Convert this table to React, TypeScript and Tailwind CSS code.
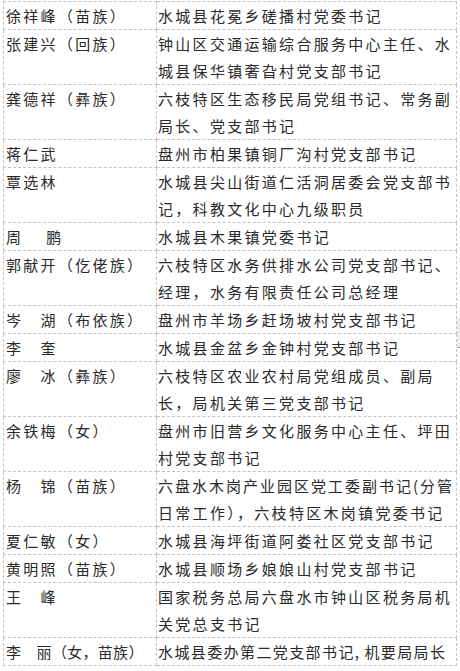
import React from "react";

type Line = { text: React.ReactNode; cls?: string };
type Row = { name: string; nameCls?: string; lines: Line[] };

const rows: Row[] = [
  { name: "徐祥峰（苗族）", lines: [{ text: "水城县花冕乡磋播村党委书记" }] },
  { name: "张建兴（回族）", lines: [{ text: "钟山区交通运输综合服务中心主任、水" }, { text: "城县保华镇奢旮村党支部书记" }] },
  { name: "龚德祥（彝族）", lines: [{ text: "六枝特区生态移民局党组书记、常务副" }, { text: "局长、党支部书记" }] },
  { name: "蒋仁武", lines: [{ text: "盘州市柏果镇铜厂沟村党支部书记" }] },
  { name: "覃选林", lines: [{ text: "水城县尖山街道仁活洞居委会党支部书" }, { text: "记，科教文化中心九级职员" }] },
  { name: "周　 鹏", lines: [{ text: "水城县木果镇党委书记" }] },
  { name: "郭献开（仡佬族）", lines: [{ text: "六枝特区水务供排水公司党支部书记、" }, { text: "经理，水务有限责任公司总经理" }] },
  { name: "岑　湖（布依族）", lines: [{ text: "盘州市羊场乡赶场坡村党支部书记" }] },
  { name: "李　奎", lines: [{ text: "水城县金盆乡金钟村党支部书记" }] },
  { name: "廖　冰（彝族）", lines: [{ text: "六枝特区农业农村局党组成员、副局" }, { text: "长，局机关第三党支部书记" }] },
  { name: "余铁梅（女）", lines: [{ text: "盘州市旧营乡文化服务中心主任、坪田" }, { text: "村党支部书记" }] },
  {
    name: "杨　锦（苗族）",
    lines: [
      { text: "六盘水木岗产业园区党工委副书记(分管", cls: "tracking-[2px]" },
      { text: "日常工作），六枝特区木岗镇党委书记" },
    ],
  },
  { name: "夏仁敏（女）", lines: [{ text: "水城县海坪街道阿娄社区党支部书记" }] },
  { name: "黄明照（苗族）", lines: [{ text: "水城县顺场乡娘娘山村党支部书记" }] },
  { name: "王　峰", lines: [{ text: "国家税务总局六盘水市钟山区税务局机" }, { text: "关党总支书记" }] },
  {
    name: "李　丽（女，苗族）",
    nameCls: "tracking-[0.3px]",
    lines: [
      {
        text: (
          <>
            水城县委办第二党支部书记<span className="mr-[4px]">,</span>机要局局长
          </>
        ),
        cls: "tracking-[1.4px]",
      },
    ],
  },
];

export default function App() {
  return (
    <div
      className="relative w-[460px] h-[671px] bg-white pl-[3px] pt-[1px] overflow-hidden text-[#2a2a2a]"
      style={{ fontFamily: "'Noto Sans CJK SC', 'Noto Sans', sans-serif" }}
    >
      <table className="table-fixed border-collapse w-[453px] text-[15px] leading-[27px] tracking-[2.3px]">
        <colgroup>
          <col className="w-[153px]" />
          <col className="w-[300px]" />
        </colgroup>
        <tbody>
          {rows.map((r, i) => (
            <tr key={i}>
              <td className="border border-dashed border-[#c4c4c4] align-top p-0 pl-[2px] whitespace-nowrap">
                <span className={r.nameCls}>{r.name}</span>
              </td>
              <td className="border border-dashed border-[#c4c4c4] align-top p-0 pl-[1px] whitespace-nowrap">
                {r.lines.map((l, j) => (
                  <div key={j} className={l.cls}>
                    {l.text}
                  </div>
                ))}
              </td>
            </tr>
          ))}
        </tbody>
      </table>
      <div className="absolute left-[457px] top-[318px] w-[3px] h-[30px] bg-[#ececec] border-b border-[#9a9a9a]" />
    </div>
  );
}
